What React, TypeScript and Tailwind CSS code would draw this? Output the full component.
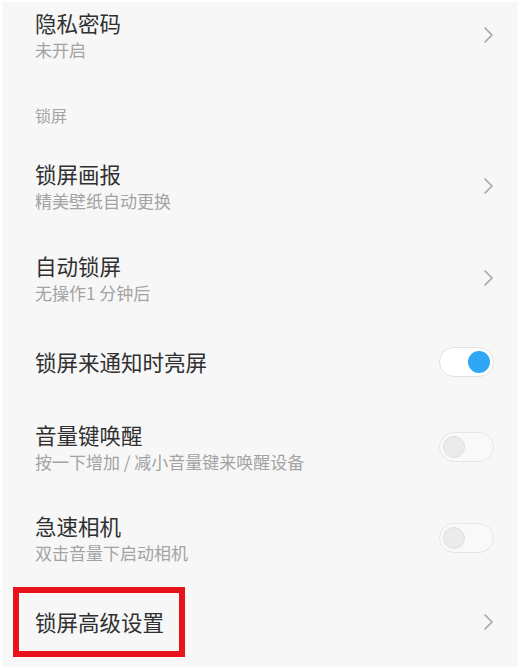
import React from "react";

const font = { fontFamily: '"Noto Sans CJK SC", "Noto Sans", sans-serif' };

function Chevron() {
  return (
    <svg width="12" height="18" viewBox="0 0 12 18" className="shrink-0">
      <path d="M3 2 L10 9 L3 16" fill="none" stroke="#a6a6a6" strokeWidth="1.6" strokeLinecap="round" strokeLinejoin="round" />
    </svg>
  );
}

function Toggle({ on }: { on: boolean }) {
  return on ? (
    <div className="w-[55px] h-[30px] rounded-full border border-[#e2e2e2] bg-white flex items-center justify-end pr-[3px] shrink-0">
      <div className="w-[22px] h-[22px] rounded-full bg-[#2ea8f4]" />
    </div>
  ) : (
    <div className="w-[55px] h-[30px] rounded-full border border-[#e6e6e6] bg-[#f9f9f9] flex items-center justify-start pl-[3px] shrink-0">
      <div className="w-[22px] h-[22px] rounded-full bg-[#ebebeb] border border-[#e0e0e0]" />
    </div>
  );
}

function Row({ title, sub, right, h }: { title: string; sub?: string; right: React.ReactNode; h: string }) {
  return (
    <div className={`flex items-center justify-between pl-[33px] pr-[24px] ${h}`}>
      <div className="flex flex-col">
        <div className="text-[21.5px] leading-[26px] text-[#303030]">{title}</div>
        {sub && <div className="text-[17px] leading-[22px] mt-[3px] text-[#a3a3a3]">{sub}</div>}
      </div>
      {right}
    </div>
  );
}

export default function App() {
  return (
    <div className="w-[520px] h-[669px] bg-white p-[2px] overflow-hidden" style={font}>
      <div className="w-full h-full bg-[#f7f7f7] flex flex-col">
        <div className="flex items-center justify-between pl-[33px] pr-[24px] h-[66px]">
          <div className="flex flex-col">
            <div className="text-[21.5px] leading-[26px] text-[#303030]">隐私密码</div>
            <div className="text-[17px] leading-[22px] mt-[3px] text-[#a3a3a3]">未开启</div>
          </div>
          <Chevron />
        </div>
        <div className="h-[72px] flex items-end pl-[33px] pb-[14px]">
          <div className="text-[16px] leading-[22px] text-[#a3a3a3]">锁屏</div>
        </div>
        <Row h="h-[92px]" title="锁屏画报" sub="精美壁纸自动更换" right={<Chevron />} />
        <Row h="h-[92px]" title="自动锁屏" sub="无操作1 分钟后" right={<Chevron />} />
        <Row h="h-[76px]" title="锁屏来通知时亮屏" right={<Toggle on />} />
        <Row h="h-[94px]" title="音量键唤醒" sub="按一下增加 / 减小音量键来唤醒设备" right={<Toggle on={false} />} />
        <Row h="h-[88px]" title="急速相机" sub="双击音量下启动相机" right={<Toggle on={false} />} />
        <div className="h-[80px] flex items-center justify-between pl-[11px] pr-[24px]">
          <div className="border-[6px] border-[#e8141c] w-[172px] h-[70px] flex items-center pl-[16px]">
            <div className="text-[21.5px] leading-[26px] text-[#303030]">锁屏高级设置</div>
          </div>
          <Chevron />
        </div>
      </div>
    </div>
  );
}
